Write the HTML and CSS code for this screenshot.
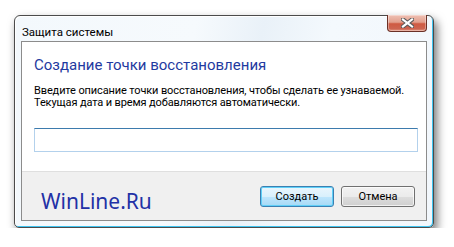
FILE: index.html
```html
<!DOCTYPE html>
<html lang="ru">
<head>
<meta charset="utf-8">
<title>Защита системы</title>
<link rel="stylesheet" href="styles.css">
</head>
<body>
<div class="window">
  <div class="titlebar">
    <span class="title">Защита системы</span>
    <div class="close">
      <svg width="13" height="10" viewBox="0 0 13 10">
        <path d="M2 1.5 L11 8.5 M11 1.5 L2 8.5" stroke="#5a5a5a" stroke-width="4.2" stroke-linecap="square" fill="none"/>
        <path d="M2 1.5 L11 8.5 M11 1.5 L2 8.5" stroke="#ffffff" stroke-width="2.2" stroke-linecap="square" fill="none"/>
      </svg>
    </div>
  </div>
  <div class="client">
    <div class="main">
      <h1 class="heading">Создание точки восстановления</h1>
      <p class="desc">Введите описание точки восстановления, чтобы сделать ее узнаваемой.<br>Текущая дата и время добавляются автоматически.</p>
      <div class="input"></div>
    </div>
    <div class="footer">
      <span class="brand">WinLine.Ru</span>
      <div class="buttons">
        <button class="btn btn-default">Создать</button>
        <button class="btn">Отмена</button>
      </div>
    </div>
  </div>
</div>
</body>
</html>
```
FILE: styles.css
```css
* { box-sizing: border-box; }
html, body { margin: 0; padding: 0; background: #ffffff; }
body {
  font-family: Roboto, "Noto Sans", sans-serif;
  padding: 15px 0 0 14px;
}
.window {
  width: 420px;
  height: 213px;
  border: 1px solid #4b4b4b;
  border-radius: 6px 6px 5px 5px;
  background: linear-gradient(100deg, #f3f8fc 0%, #f6fafd 40%, #e9f1f8 55%, #f4f9fd 70%, #f2f7fc 100%);
  box-shadow: inset -1px -1px 0 #3ec4f0, inset 1px 1px 0 #ffffff, 3px 5px 10px rgba(0,0,0,0.55);
  padding: 0 6px 6px 6px;
  display: flex;
  flex-direction: column;
}
.titlebar {
  height: 25px;
  display: flex;
  justify-content: space-between;
  align-items: flex-start;
}
.title {
  font-size: 11.5px;
  line-height: 16px;
  margin: 8px 0 0 1px;
  color: #000;
  white-space: nowrap;
}
.close {
  width: 40px;
  height: 17px;
  margin-top: -1px;
  border: 1px solid #6a3026;
  border-top: none;
  border-radius: 0 0 4px 4px;
  background: linear-gradient(#efc0b3 0%, #e2a08e 45%, #cf5a42 55%, #cc6450 85%, #e3957f 100%);
  box-shadow: inset 0 0 0 1px rgba(255,255,255,0.35);
  display: flex;
  align-items: center;
  justify-content: center;
}
.client {
  flex: 1;
  border: 1px solid #8c8c8c;
  display: flex;
  flex-direction: column;
  background: #ffffff;
}
.main {
  height: 129px;
  padding: 13px 10px 0 12px;
  background: #ffffff;
}
.heading {
  margin: 0;
  font-size: 15px;
  line-height: 20px;
  font-weight: normal;
  color: #1f3aa0;
  white-space: nowrap;
}
.desc {
  margin: 10px 0 0 0;
  font-size: 11px;
  letter-spacing: -0.12px;
  line-height: 12px;
  color: #000;
  white-space: nowrap;
}
.input {
  margin-top: 19px;
  width: 384px;
  height: 24px;
  border: 1px solid #b3d1ec;
  border-top-color: #3d7bad;
  background: #fff;
}
.footer {
  flex: 1;
  background: #f0f0f0;
  border-top: 1px solid #dfdfdf;
  display: flex;
  justify-content: space-between;
  align-items: flex-start;
  padding: 14px 11px 0 19px;
}
.brand {
  font-family: "Noto Sans", sans-serif;
  font-size: 21px;
  line-height: 24px;
  margin-top: 3px;
  color: #2231a6;
}
.buttons {
  display: flex;
  gap: 7px;
}
.btn {
  width: 74px;
  height: 21px;
  font-family: Roboto, "Noto Sans", sans-serif;
  font-size: 11px;
  line-height: 17px;
  padding: 0;
  color: #000;
  border: 1px solid #707070;
  border-radius: 3px;
  background: linear-gradient(#f2f2f2 0%, #ebebeb 50%, #dddddd 51%, #cfcfcf 100%);
  box-shadow: inset 0 0 0 1px rgba(255,255,255,0.7);
}
.btn-default {
  border-color: #3c7fb1;
  background: linear-gradient(#eaf6fd 0%, #d9f0fc 50%, #bee6fd 51%, #a7d9f5 100%);
  box-shadow: inset 0 0 0 1px #5fd0f8;
}
```
